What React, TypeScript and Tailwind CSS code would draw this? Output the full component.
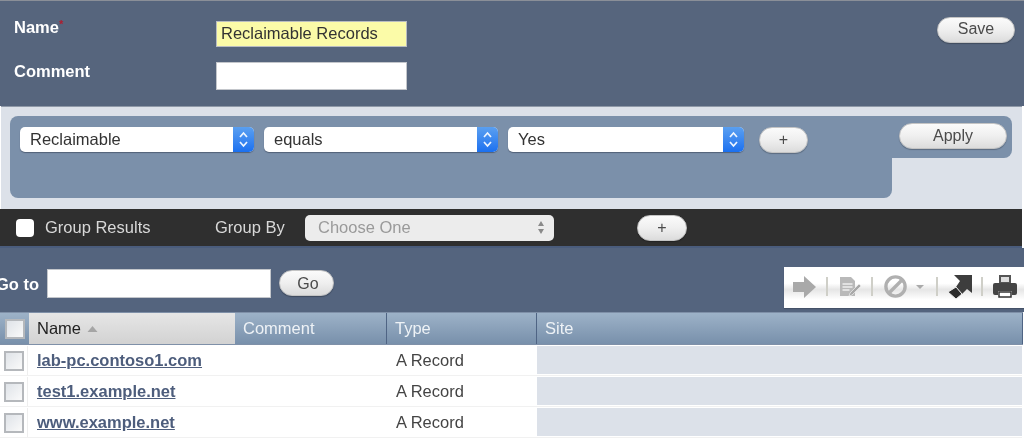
import React from 'react';

const font = "font-['Liberation_Sans',Arial,sans-serif]";

const PillButton = ({ label, className }: { label: string; className: string }) => (
  <button className={`flex h-[26px] items-center justify-center rounded-full border border-[#c4c4c4] bg-gradient-to-b from-[#fbfbfb] via-[#efefef] to-[#dcdcdc] text-[16px] text-[#4b4b4b] shadow-[0_1px_1px_rgba(0,0,0,0.25)] ${className}`}>
    {label}
  </button>
);

const BlueSelect = ({ label, className }: { label: string; className: string }) => (
  <div className={`flex h-[25px] items-stretch rounded-[5px] bg-white shadow-[0_1px_1px_rgba(40,50,70,0.5)] ${className}`}>
    <span className="flex-1 pl-[10px] text-[16.500px] leading-[25px] text-[#333]">{label}</span>
    <span className="flex w-[21px] items-center justify-center rounded-r-[5px] bg-gradient-to-b from-[#5a9ff0] to-[#1a70f0]">
      <svg width="11" height="17" viewBox="0 0 11 17" fill="none" stroke="#eef5ff" strokeWidth="1.7">
        <path d="M2 6l3.5-4L9 6M2 11l3.5 4L9 11" />
      </svg>
    </span>
  </div>
);

const Check = ({ className = '' }: { className?: string }) => (
  <span className={`block h-[20px] w-[20px] border-2 border-[#b5b8bc] bg-gradient-to-br from-[#dfe3e8] to-[#fafafa] ${className}`} />
);

const Sep = () => <span className="h-[19px] w-[2px] bg-[#cfcfc8]" />;

const Toolbar = () => (
  <div className="flex h-[41px] w-[240px] items-center bg-gradient-to-b from-white from-40% via-[#e6e6e6] via-55% to-white to-80% pb-[2px] pl-[8px] shadow-[0_1px_1px_rgba(60,70,90,0.6)]">
    <svg width="25" height="24" viewBox="0 0 25 24" className="mr-[9px]">
      <path d="M1 7h11V1l12 11-12 11v-6H1z" fill="#a9a9a9" />
    </svg>
    <Sep />
    <svg width="24" height="22" viewBox="0 0 24 22" className="ml-[10px] mr-[9px]">
      <path d="M2 1h11l4 4v15H2z" fill="#b9b9b9" />
      <path d="M4.500 8h10M4.500 11h10M4.500 14h7" stroke="#eee" strokeWidth="1.300" />
      <path d="M12 17l9-9 2 2-9 9-3 1z" fill="#a8a8a8" stroke="#eee" strokeWidth="0.700" />
    </svg>
    <Sep />
    <svg width="25" height="25" viewBox="0 0 26 26" className="ml-[10px] mr-[7px]" fill="none" stroke="#b0b0b0" strokeWidth="3.500">
      <circle cx="13" cy="13" r="10" />
      <path d="M6 20L20 6" />
    </svg>
    <svg width="10" height="6" viewBox="0 0 10 6" className="mr-[11px]">
      <path d="M1 1h8L5 5z" fill="#aaa" />
    </svg>
    <Sep />
    <svg width="26" height="26" viewBox="0 0 26 26" className="ml-[9px] mr-[8px]">
      <path d="M7 1h18v18l-5-4-5 5-6-7 4-6z" fill="#3d3d3d" />
      <path d="M9 13l6 7-6 5-8-7z" fill="#2c2c2c" stroke="#eee" strokeWidth="1" />
    </svg>
    <Sep />
    <svg width="26" height="25" viewBox="0 0 26 25" className="ml-[9px]">
      <path d="M7 1h12v8H7z" fill="#555" />
      <path d="M9 3h8v5H9z" fill="#ddd" />
      <path d="M3 9h20a2 2 0 0 1 2 2v8a2 2 0 0 1-2 2h-3v-4H6v4H3a2 2 0 0 1-2-2v-8a2 2 0 0 1 2-2z" fill="#444" />
      <path d="M7 18h12v5H7z" fill="#fff" stroke="#333" strokeWidth="1.500" />
    </svg>
  </div>
);

const rows = ['lab-pc.contoso1.com', 'test1.example.net', 'www.example.net'];

const headerCell =
  'flex items-center border-r border-[#4f6484] bg-gradient-to-b from-[#9db2c8] to-[#7890ab] pl-[8px] text-[16.500px] text-[#eef2f6]';

export default function App() {
  return (
    <div className={`h-[443px] w-[1024px] overflow-hidden bg-white blur-[0.6px] ${font}`}>
      <div className="h-[1px] bg-[#8a8f98]" />

      {/* name + comment */}
      <div className="flex h-[105px] bg-[#56657d] pl-[14px] pr-[9px]">
        <div className="w-[202px] pt-[16px] text-[16.500px] font-bold text-white">
          <div className="h-[44px] leading-[20px]">
            Name<span className="relative -top-[5px] text-[11px] text-[#b01c2e]">*</span>
          </div>
          <div className="leading-[20px]">Comment</div>
        </div>
        <div className="w-[191px] pt-[20px]">
          <div className="h-[26px] border border-[#b9bdc2] bg-[#fbfba8] pl-[4px] text-[16.500px] leading-[22px] text-[#333]">
            Reclaimable Records
          </div>
          <div className="mt-[15px] h-[28px] border border-[#c3c6cb] bg-white" />
        </div>
        <div className="ml-auto pt-[16px]">
          <PillButton label="Save" className="w-[78px] pb-[3px]" />
        </div>
      </div>

      {/* filter panel */}
      <div className="mr-[2px] ml-[1px] h-[103px] border-t border-[#8f99a8] bg-[#dce1e9] pl-[9px] pr-[10px] pt-[9px]">
        <div className="flex h-[42px] items-start rounded-t-[8px] rounded-br-[8px] bg-[#7b90aa] pl-[10px] pr-[5px] pt-[11px]">
          <BlueSelect label="Reclaimable" className="w-[234px]" />
          <BlueSelect label="equals" className="ml-[10px] w-[234px]" />
          <BlueSelect label="Yes" className="ml-[10px] w-[236px]" />
          <PillButton label="+" className="ml-[15px] w-[49px]" />
          <div className="ml-auto -mt-[4px]">
            <PillButton label="Apply" className="w-[108px]" />
          </div>
        </div>
        <div className="h-[40px] w-[882px] rounded-b-[8px] bg-[#7b90aa]" />
      </div>

      {/* group bar */}
      <div className="mr-[2px] flex h-[39px] items-center border-b-2 border-[#4a5c7c] bg-[#2f2f2f] pl-[16px] text-[16.500px] text-[#d8d8d8]">
        <span className="h-[18px] w-[18px] rounded-[4px] bg-white" />
        <span className="ml-[11px] w-[170px]">Group Results</span>
        <span className="w-[90px]">Group By</span>
        <div className="flex h-[26px] w-[249px] items-center justify-between rounded-[5px] bg-[#ececec] pl-[13px] pr-[9px] text-[#9a9a9a]">
          Choose One
          <svg width="8" height="15" viewBox="0 0 8 15" fill="#8a8a8a">
            <path d="M4 1l3 5H1zM4 14l3-5H1z" />
          </svg>
        </div>
        <PillButton label="+" className="ml-[83px] w-[50px]" />
      </div>

      {/* go to bar */}
      <div className="flex h-[64px] items-start bg-[#54647e] pt-[19px]">
        <span className="-ml-[4px] mt-[5px] w-[51px] text-[16.500px] font-bold text-white">Go to</span>
        <div className="mt-[2px] h-[29px] w-[224px] border border-[#c3c6cb] bg-white" />
        <PillButton label="Go" className="ml-[8px] mt-[3px] w-[55px] pl-[3px] pt-[2px]" />
        <div className="ml-auto">
          <Toolbar />
        </div>
      </div>

      {/* table */}
      <div className="mr-[1px] grid h-[33px] grid-cols-[29px_206px_152px_150px_1fr] border-y border-[#7f90a8] bg-[#7890ab]">
        <div className="flex items-center justify-center bg-gradient-to-b from-[#9db2c8] to-[#7890ab]">
          <Check className="border-[#9a9a9a]" />
        </div>
        <div className="flex items-center bg-gradient-to-b from-[#e6e6e6] to-[#d2d2d2] pl-[8px] text-[16.500px] text-[#222]">
          Name
          <svg width="11" height="6" viewBox="0 0 11 6" className="ml-[6px]">
            <path d="M5.500 0l5 6H.5z" fill="#a5a5a5" />
          </svg>
        </div>
        <div className={headerCell}>Comment</div>
        <div className={headerCell}>Type</div>
        <div className={headerCell}>Site</div>
      </div>
      {rows.map((name) => (
        <div
          key={name}
          className="mr-[2px] grid h-[31px] grid-cols-[28px_208px_151px_150px_1fr] border-b border-[#f1f1f1] pt-[1px]"
        >
          <div className="flex items-center justify-center border-r border-[#eeeeee]">
            <Check />
          </div>
          <a className="self-center pl-[9px] text-[16.500px] font-bold text-[#4d5d7c] underline">{name}</a>
          <span />
          <span className="self-center pl-[9px] text-[16.500px] text-[#444]">A Record</span>
          <span className="mb-[1px] bg-[#dce1e9]" />
        </div>
      ))}
    </div>
  );
}
